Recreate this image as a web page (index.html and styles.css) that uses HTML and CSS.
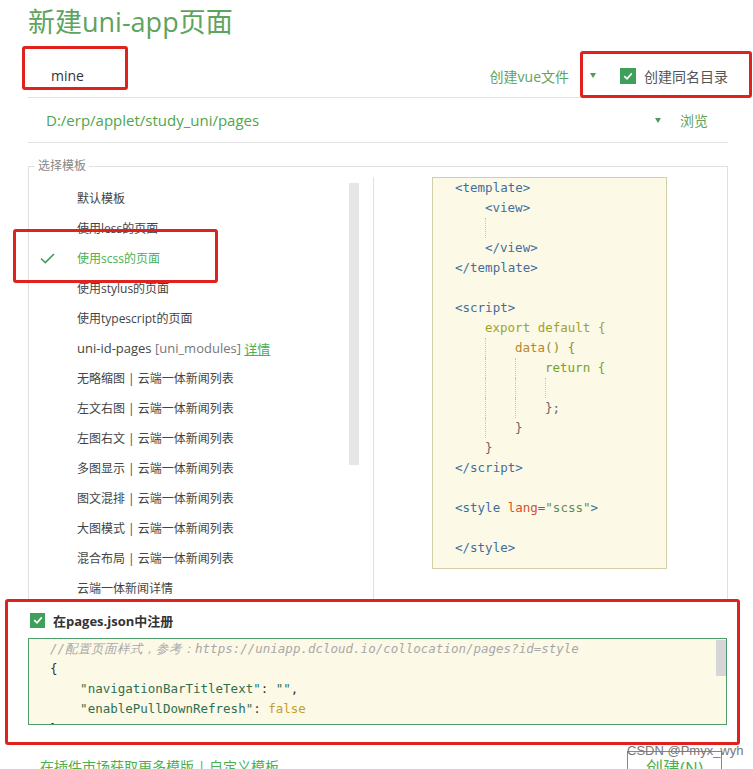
FILE: index.html
```
<!DOCTYPE html>
<html lang="zh">
<head>
    <meta charset="UTF-8">
    <meta name="viewport" content="width=device-width, initial-scale=1.0">
    <title>新建uni-app页面</title>
    <link rel="stylesheet" href="styles.css">
</head>
<body>
<div class="page">
    <div class="dialog">
        <h1 class="title">新建uni-app页面</h1>

        <div class="name-row">
            <div class="name-input">mine</div>
            <div class="name-opts">
                <span class="link-green">创建vue文件</span>
                <span class="caret"></span>
                <label class="check-label">
                    <span class="checkbox">
                        <svg width="12" height="12" viewBox="0 0 12 12"><path d="M2.2 6.2 L5 8.8 L9.8 3.4" fill="none" stroke="#fff" stroke-width="1.6"/></svg>
                    </span>
                    创建同名目录
                </label>
            </div>
        </div>

        <div class="path-row">
            <div class="path-text">D:/erp/applet/study_uni/pages</div>
            <div class="path-opts">
                <span class="caret"></span>
                <span class="link-green browse">浏览</span>
            </div>
        </div>

        <fieldset class="tpl-box">
            <legend>选择模板</legend>
            <div class="tpl-body">
                <div class="tpl-list">
                    <ul class="tpl-items">
                        <li><span class="tick"></span>默认模板</li>
                        <li><span class="tick"></span>使用less的页面</li>
                        <li class="selected">
                            <span class="tick">
                                <svg width="15" height="11" viewBox="0 0 15 11"><path d="M1 5.5 L5.3 9.6 L14 1" fill="none" stroke="#3f9d5c" stroke-width="1.6"/></svg>
                            </span>使用scss的页面
                        </li>
                        <li><span class="tick"></span>使用stylus的页面</li>
                        <li><span class="tick"></span>使用typescript的页面</li>
                        <li class="plugin"><span class="tick"></span>uni-id-pages&nbsp;<span class="muted">[uni_modules]</span>&nbsp;<a class="detail">详情</a></li>
                        <li><span class="tick"></span>无略缩图 | 云端一体新闻列表</li>
                        <li><span class="tick"></span>左文右图 | 云端一体新闻列表</li>
                        <li><span class="tick"></span>左图右文 | 云端一体新闻列表</li>
                        <li><span class="tick"></span>多图显示 | 云端一体新闻列表</li>
                        <li><span class="tick"></span>图文混排 | 云端一体新闻列表</li>
                        <li><span class="tick"></span>大图模式 | 云端一体新闻列表</li>
                        <li><span class="tick"></span>混合布局 | 云端一体新闻列表</li>
                        <li><span class="tick"></span>云端一体新闻详情</li>
                    </ul>
                    <div class="scroll-thumb"></div>
                </div>

                <div class="tpl-preview">
                    <div class="code">
                        <div class="ln"><span class="tag">&lt;template&gt;</span></div>
                        <div class="ln"><span class="ind"></span><span class="tag">&lt;view&gt;</span></div>
                        <div class="ln"><span class="ind"></span><span class="ind g"></span></div>
                        <div class="ln"><span class="ind"></span><span class="tag">&lt;/view&gt;</span></div>
                        <div class="ln"><span class="tag">&lt;/template&gt;</span></div>
                        <div class="ln"></div>
                        <div class="ln"><span class="tag">&lt;script&gt;</span></div>
                        <div class="ln"><span class="ind"></span><span class="kw">export default {</span></div>
                        <div class="ln"><span class="ind"></span><span class="ind g"></span><span class="fn">data</span><span class="fn2">() {</span></div>
                        <div class="ln"><span class="ind"></span><span class="ind g"></span><span class="ind g"></span><span class="ret">return {</span></div>
                        <div class="ln"><span class="ind"></span><span class="ind g"></span><span class="ind g"></span><span class="ind g"></span></div>
                        <div class="ln"><span class="ind"></span><span class="ind g"></span><span class="ind g"></span><span class="pun">};</span></div>
                        <div class="ln"><span class="ind"></span><span class="ind g"></span><span class="pun">}</span></div>
                        <div class="ln"><span class="ind"></span><span class="pun">}</span></div>
                        <div class="ln"><span class="tag">&lt;/script&gt;</span></div>
                        <div class="ln"></div>
                        <div class="ln"><span class="tag">&lt;style </span><span class="attr">lang</span><span class="pun">=</span><span class="str">"scss"</span><span class="tag">&gt;</span></div>
                        <div class="ln"></div>
                        <div class="ln"><span class="tag">&lt;/style&gt;</span></div>
                    </div>
                </div>
            </div>
        </fieldset>

        <div class="register-row">
            <span class="checkbox">
                <svg width="12" height="12" viewBox="0 0 12 12"><path d="M2.2 6.2 L5 8.8 L9.8 3.4" fill="none" stroke="#fff" stroke-width="1.6"/></svg>
            </span>
            <span class="register-text">在pages.json中注册</span>
        </div>

        <div class="json-box">
            <div class="json-code">
                <div class="ln cmt">//配置页面样式，参考：https://uniapp.dcloud.io/collocation/pages?id=style</div>
                <div class="ln">{</div>
                <div class="ln">    <span class="key">"navigationBarTitleText"</span>: <span class="key">""</span>,</div>
                <div class="ln">    <span class="key">"enablePullDownRefresh"</span>: <span class="bool">false</span></div>
                <div class="ln">}</div>
            </div>
            <div class="json-scroll"><div class="json-thumb"></div></div>
        </div>

        <div class="footer">
            <div class="more-link">在插件市场获取更多模版 | 自定义模板</div>
            <button class="create-btn">创建(N)</button>
        </div>
    </div>

    <!-- annotation boxes drawn over the dialog -->
    <div class="mark mark-name"></div>
    <div class="mark mark-dir"></div>
    <div class="mark mark-scss"></div>
    <div class="mark mark-json"></div>
    <div class="watermark">CSDN @Pmyx_wyh</div>
</div>
</body>
</html>
```

FILE: styles.css
```
body {
    margin: 0;
    background: #fff;
    font-family: "Open Sans", "Noto Sans CJK SC", sans-serif;
    color: #333;
    overflow: hidden;
}
.page {
    position: relative;
    width: 753px;
    height: 769px;
    overflow: hidden;
}
.dialog {
    width: 700px;
    margin-left: 28px;
}
.title {
    margin: 0;
    padding-top: 6px;
    font-size: 27px;
    line-height: 32px;
    font-weight: normal;
    color: #5ea35e;
}
.name-row {
    height: 43px;
    padding-top: 16px;
    display: flex;
    align-items: center;
    justify-content: space-between;
    border-bottom: 1px solid #e3e3e3;
}
.name-input {
    padding-left: 23px;
    font-size: 14px;
    color: #333;
}
.name-opts {
    display: flex;
    align-items: center;
    padding-right: 0;
}
.link-green {
    color: #5ea35e;
    font-size: 14px;
}
.caret {
    display: inline-block;
    width: 0;
    height: 0;
    border-left: 3px solid transparent;
    border-right: 3px solid transparent;
    border-top: 5px solid #4f9a5f;
}
.name-opts .caret {
    margin: 0 24px 0 21px;
}
.check-label {
    display: flex;
    align-items: center;
    font-size: 14px;
    color: #555;
}
.checkbox {
    display: inline-flex;
    align-items: center;
    justify-content: center;
    width: 16px;
    height: 16px;
    background: #3fa05c;
    margin-right: 8px;
}
.path-row {
    height: 44px;
    display: flex;
    align-items: center;
    justify-content: space-between;
    border-bottom: 1px solid #e3e3e3;
}
.path-text {
    padding-left: 18px;
    font-size: 15px;
    color: #4ea64e;
}
.path-opts {
    display: flex;
    align-items: center;
    padding-right: 20px;
}
.browse {
    margin-left: 19px;
}
.tpl-box {
    margin: 16px 0 0 0;
    padding: 0;
    width: 698px;
    height: 442px;
    box-sizing: content-box;
    border: 1px solid #e0e0e0;
    border-bottom: none;
}
.tpl-box legend {
    margin-left: 6px;
    padding: 0 3px;
    font-size: 12px;
    line-height: 14px;
    color: #888;
}
.tpl-body {
    display: flex;
    height: 434px;
    margin-top: -6px;
}
.tpl-list {
    width: 344px;
    display: flex;
    padding-top: 16px;
    overflow: hidden;
}
.tpl-items {
    list-style: none;
    margin: 0;
    padding: 0;
    flex: 1;
}
.tpl-items li {
    display: flex;
    align-items: center;
    height: 30px;
    font-size: 12px;
    color: #444;
    white-space: nowrap;
}
.tick {
    display: inline-flex;
    width: 37px;
    padding-left: 11px;
}
.tpl-items li.selected {
    color: #4caf50;
}
.tpl-items li.plugin {
    font-size: 13px;
}
.muted {
    color: #777;
}
.detail {
    color: #4caf50;
    text-decoration: underline;
}
.scroll-thumb {
    width: 10px;
    height: 282px;
    background: #e6e6e6;
    margin-right: 14px;
    flex-shrink: 0;
}
.tpl-preview {
    flex: 1;
    margin-top: 10px;
    border-left: 1px solid #e0e0e0;
    padding-left: 58px;
}
.code {
    width: 211px;
    height: 390px;
    padding: 0 0 0 22px;
    background: #fdf9e7;
    border: 1px solid #d3cfa6;
    font-family: "DejaVu Sans Mono", "Liberation Mono", monospace;
    font-size: 12.5px;
    color: #6b6b3a;
}
.ln {
    height: 20px;
    line-height: 20px;
    white-space: pre;
}
.ind {
    display: inline-block;
    width: 30px;
    height: 20px;
    vertical-align: top;
    box-sizing: border-box;
}
.ind.g {
    border-left: 1px dotted #c9c6b0;
}
.tag { color: #3f6e9c; }
.kw { color: #9ea22e; }
.fn { color: #b8862a; }
.fn2 { color: #8f8a3a; }
.ret { color: #6ea52c; }
.pun { color: #666; }
.attr { color: #d2512d; }
.str { color: #5b8c5a; }
.register-row {
    height: 36px;
    display: flex;
    align-items: center;
    padding-left: 2px;
}
.register-row .checkbox {
    width: 15px;
    height: 15px;
    margin-right: 8px;
}
.register-text {
    font-size: 13px;
    font-weight: bold;
    color: #333;
}
.json-box {
    display: flex;
    width: 697px;
    height: 85px;
    border: 1px solid #4f9c6c;
    background: #fdf9e7;
    overflow: hidden;
}
.json-code {
    flex: 1;
    padding-left: 21px;
    font-family: "DejaVu Sans Mono", "Liberation Mono", monospace;
    font-size: 12.5px;
    color: #333;
}
.json-code .cmt {
    color: #a8a8a8;
    font-style: italic;
}
.key { color: #2f6f4f; }
.bool { color: #c79d2c; }
.json-scroll {
    width: 10px;
    padding-top: 1px;
}
.json-thumb {
    height: 36px;
    background: #d6d6d6;
}
.footer {
    display: flex;
    justify-content: space-between;
    margin-top: 26px;
}
.more-link {
    padding-left: 12px;
    padding-top: 5px;
    font-size: 14px;
    color: #4caf50;
}
.create-btn {
    width: 95px;
    height: 34px;
    margin-right: 6px;
    border: 1px solid #4caf50;
    background: #fff;
    color: #4caf50;
    font-family: "Open Sans", "Noto Sans CJK SC", sans-serif;
    font-size: 17px;
    padding: 0;
    line-height: 30px;
}
.mark {
    position: absolute;
    border: 3px solid #e0221e;
    border-radius: 3px;
    box-sizing: border-box;
}
.mark-name { left: 22px; top: 46px; width: 106px; height: 44px; }
.mark-dir { left: 580px; top: 51px; width: 172px; height: 47px; }
.mark-scss { left: 13px; top: 229px; width: 205px; height: 54px; }
.mark-json { left: 5px; top: 599px; width: 735px; height: 146px; }
.watermark {
    position: absolute;
    left: 627px;
    top: 743px;
    font-family: "Liberation Sans", Arial, sans-serif;
    font-size: 13px;
    color: #777;
}
```
